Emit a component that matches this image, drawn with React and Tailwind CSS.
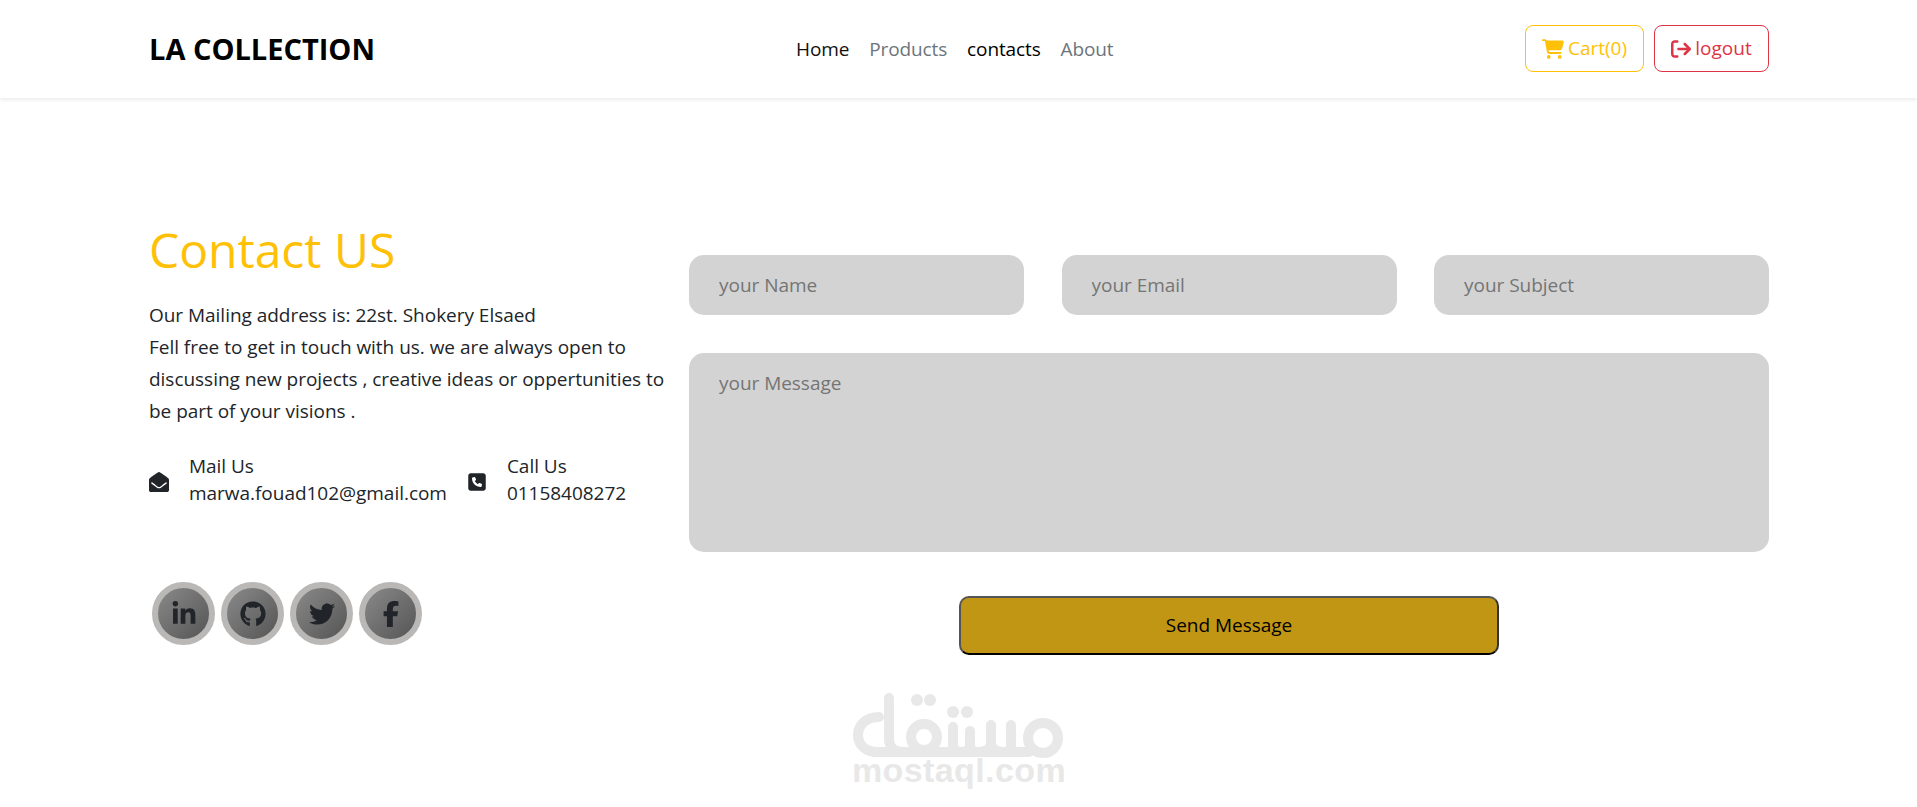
import { FaEnvelopeOpen } from "react-icons/fa";
import { FaArrowRightFromBracket, FaCartShopping, FaFacebookF, FaGithub, FaLinkedinIn, FaSquarePhone, FaTwitter } from "react-icons/fa6";

const socials = [FaLinkedinIn, FaGithub, FaTwitter, FaFacebookF];

const MostaqlMark = () => (
  <div className="absolute left-[852px] top-[693px] flex w-[214px] flex-col items-center">
    <svg width="212" height="66" viewBox="0 0 212 66" fill="none" stroke="#e8e8e8" strokeWidth="10" strokeLinecap="round">
      <path d="M26 24 C12 24 5 33 5 42 C5 52 13 59 24 59 L176 59" />
      <path d="M36 5 V46 C36 54 42 59 50 59" />
      <circle cx="71" cy="44" r="13" />
      <path d="M100 34 V52 C100 56 104 59 108 59 C114 59 117 56 117 52 V38" />
      <path d="M117 52 C117 56 120 59 124 59 C132 59 138 56 138 50 V32" />
      <path d="M138 50 C138 56 144 59 150 59 C156 59 158 56 158 52 V32" />
      <circle cx="190" cy="45" r="15" />
      <g fill="#e8e8e8" stroke="none">
        <circle cx="64" cy="7" r="6" />
        <circle cx="77" cy="7" r="6" />
        <circle cx="100" cy="19" r="6" />
        <circle cx="114" cy="19" r="6" />
      </g>
    </svg>
    <span className="mt-[-5px] font-['Liberation_Sans',sans-serif] text-[34px] leading-[32px] font-bold tracking-[0.4px] text-[#e8e8e8]">mostaql.com</span>
  </div>
);

const ContactItem = ({ icon: Icon, size, label, value }) => (
  <div className="flex items-center">
    <Icon size={size} className="mt-[4px] text-[#212529]" />
    <div className="ml-5 text-[#212529]">
      <p>{label}</p>
      <p>{value}</p>
    </div>
  </div>
);

const App = () => {
  return (
    <div className="relative h-[807px] overflow-hidden bg-white font-['Open_Sans',sans-serif] text-[19px] leading-[27px] tracking-[-0.03px] text-[#212529]">
      <header className="h-[98px] bg-white pr-[148px] pl-[149px] shadow-[0_2px_4px_rgba(0,0,0,0.08)]">
        <div className="flex h-full items-center">
          <a className="-mt-px w-[225px] text-[29px] font-bold tracking-normal whitespace-nowrap text-black">LA COLLECTION</a>
          <nav className="mt-px ml-[422px] flex gap-5 text-[19px] tracking-[-0.12px]">
            <a className="text-[#111]">Home</a>
            <a className="text-[#6c757d]">Products</a>
            <a className="text-black">contacts</a>
            <a className="text-[#6c757d]">About</a>
          </nav>
          <div className="-mt-px ml-auto flex gap-[10px]">
            <button className="flex h-[47px] w-[119px] items-center justify-center gap-1 rounded-[8px] border border-[#ffc107] text-[19px] tracking-normal text-[#ffc107]">
              <FaCartShopping size={22} />
              Cart(0)
            </button>
            <button className="flex h-[47px] w-[115px] items-center justify-center gap-1 rounded-[8px] border border-[#dc3545] text-[19px] tracking-normal text-[#dc3545]">
              <FaArrowRightFromBracket size={20} />
              logout
            </button>
          </div>
        </div>
      </header>

      <main className="flex pr-[148px] pl-[149px] pt-[120px]">
        <section className="w-[540px] shrink-0">
          <h1 className="text-[48px] leading-[64px] tracking-normal text-[#ffc107]">Contact US</h1>
          <p className="mt-[17px] w-[525px] leading-[32px]">
            Our Mailing address is: 22st. Shokery Elsaed
            <br />
            Fell free to get in touch with us. we are always open to discussing new projects , creative ideas or oppertunities to be part of your visions .
          </p>
          <div className="mt-[26px] flex gap-5">
            <ContactItem icon={FaEnvelopeOpen} size={20} label="Mail Us" value="marwa.fouad102@gmail.com" />
            <ContactItem icon={FaSquarePhone} size={20} label="Call Us" value="01158408272" />
          </div>
          <div className="mt-[75px] flex gap-[6px] pl-[3px]">
            {socials.map((Icon, i) => (
              <a key={i} className="flex size-[63px] items-center justify-center rounded-full border-[6px] border-[#b9b8b6] bg-gradient-to-br from-[#8a8a8a] to-[#555] text-[#212529]">
                <Icon size={26} />
              </a>
            ))}
          </div>
        </section>

        <form className="flex-1 pt-[37px]">
          <div className="flex justify-between">
            <input placeholder="your Name" className="h-[60px] w-[335px] rounded-[15px] bg-[#d3d3d3] px-[30px] outline-none placeholder:text-[#757575]" />
            <input placeholder="your Email" className="h-[60px] w-[335px] rounded-[15px] bg-[#d3d3d3] px-[30px] outline-none placeholder:text-[#757575]" />
            <input placeholder="your Subject" className="h-[60px] w-[335px] rounded-[15px] bg-[#d3d3d3] px-[30px] outline-none placeholder:text-[#757575]" />
          </div>
          <textarea placeholder="your Message" className="mt-[38px] block h-[199px] w-full resize-none rounded-[15px] bg-[#d3d3d3] px-[30px] py-[17px] outline-none placeholder:text-[#757575]" />
          <button type="button" className="mx-auto mt-11 block h-[59px] w-[540px] rounded-[10px] border-2 border-t-[#555] border-r-[#333] border-b-black border-l-[#555] bg-[#c29615] text-black">
            Send Message
          </button>
        </form>
      </main>

      <MostaqlMark />
    </div>
  );
};

export default App;
